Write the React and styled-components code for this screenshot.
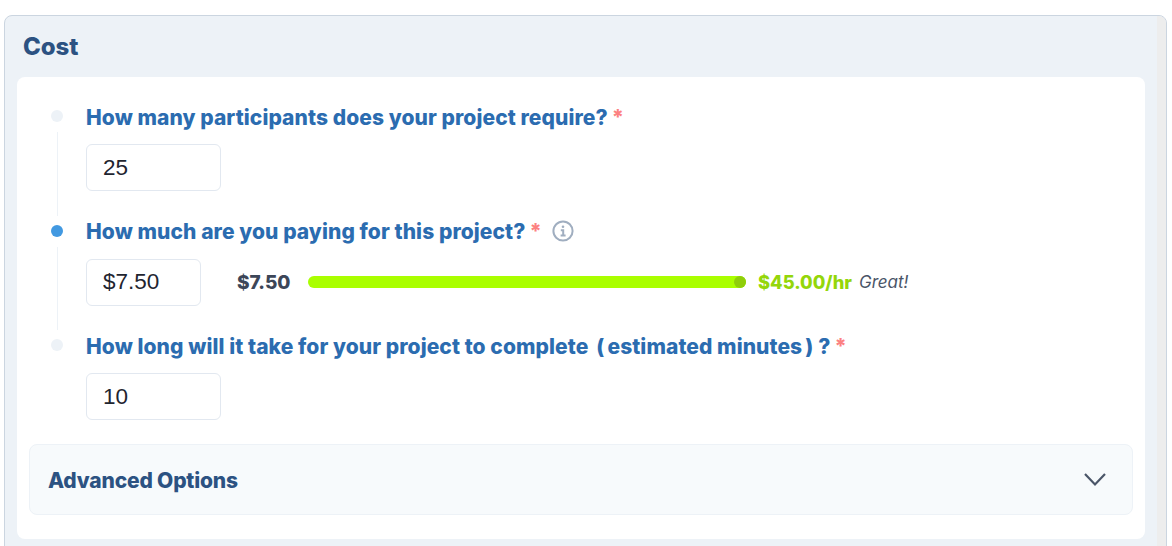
import React from 'react';
import styled, { createGlobalStyle } from 'styled-components';

const GlobalStyle = createGlobalStyle`
  html, body {
    margin: 0;
    height: 546px;
    overflow: hidden;
    background: #fff;
    font-family: Inter, "Liberation Sans", sans-serif;
  }
`;

const Page = styled.div`
  padding: 15px 5px 0 4px;
`;

const Panel = styled.section`
  display: flex;
  height: 560px;
  box-sizing: border-box;
  background: #edf2f7;
  border: 1px solid #cbd5e0;
  border-radius: 8px;
  overflow: hidden;
`;

const PanelBody = styled.div`
  flex: 1;
  min-width: 0;
  padding: 0 12px;
`;

const Gutter = styled.div`
  width: 9px;
  background: #ededed;
`;

const Title = styled.h2`
  margin: 0;
  height: 61px;
  padding: 19px 0 0 6px;
  box-sizing: border-box;
  font-size: 24px;
  line-height: 24px;
  font-weight: 800;
  letter-spacing: -0.1px;
  color: #2c5282;
`;

const Card = styled.div`
  background: #fff;
  border-radius: 8px;
  padding: 28px 12px 25px;
  height: 462px;
  box-sizing: border-box;
`;

const Step = styled.div`
  display: grid;
  grid-template-columns: 22px 1fr;
  column-gap: 18px;
  margin-left: 17px;
  height: ${p => (p.$last ? 'auto' : '114.5px')};
`;

const Rail = styled.div`
  display: flex;
  flex-direction: column;
  align-items: center;
  padding-top: 5px;
  box-sizing: border-box;
`;

const Dot = styled.div`
  width: 12px;
  height: 12px;
  border-radius: 50%;
  background: ${p => (p.$active ? '#4299e1' : '#edf2f7')};
`;

const RailLine = styled.div`
  flex: 1;
  width: 1px;
  margin: 10px 0 4px;
  background: #edf2f7;
`;

const Label = styled.div`
  display: flex;
  align-items: center;
  height: 24px;
  margin-bottom: 15px;
  font-size: 21px;
  font-weight: 800;
  letter-spacing: 0.08px;
  color: #2b6cb0;
  white-space: nowrap;
`;

const Paren = styled.span`
  margin: 0 ${p => p.$right || 0}px 0 ${p => p.$left || 0}px;
`;

const Required = styled.span`
  margin-left: 4px;
  color: #fc8181;
  font-size: 21px;
  font-weight: 800;
`;

const HelpIcon = styled.svg`
  margin: 0 0 2px 10px;
  width: 22px;
  height: 22px;
`;

const FieldRow = styled.div`
  display: flex;
  align-items: center;
`;

const Input = styled.input`
  width: ${p => p.$w}px;
  height: 47px;
  box-sizing: border-box;
  padding: 0 16px;
  border: 1px solid #e2e8f0;
  border-radius: 6px;
  background: #fff;
  color: #1f2530;
  font-family: "Liberation Sans", Arial, sans-serif;
  font-size: 22.5px;
  outline: none;
`;

const PayAmount = styled.span`
  margin-left: 36px;
  width: 71px;
  font-size: 19px;
  font-weight: 800;
  color: #3c4658;
`;

const Track = styled.div`
  position: relative;
  width: 438px;
  height: 12px;
  border-radius: 6px;
  background: #edf2f7;
`;

const Fill = styled.div`
  height: 100%;
  border-radius: 6px;
  background: #aaff00;
`;

const Thumb = styled.div`
  position: absolute;
  top: 0;
  right: 0;
  width: 12px;
  height: 12px;
  border-radius: 50%;
  background: #8fce0a;
`;

const Rate = styled.span`
  margin-left: 12px;
  font-size: 18.3px;
  font-weight: 800;
  color: #94d60a;
`;

const Verdict = styled.span`
  margin-left: 7px;
  font-size: 17px;
  font-style: italic;
  color: #4a5568;
`;

const Accordion = styled.div`
  display: flex;
  align-items: center;
  justify-content: space-between;
  box-sizing: border-box;
  height: 71px;
  margin-top: 24px;
  padding: 0 25px 0 18px;
  background: #f7fafc;
  border: 1px solid #edf2f7;
  border-radius: 8px;
`;

const AccordionTitle = styled.span`
  padding-top: 1px;
  font-size: 21px;
  font-weight: 800;
  letter-spacing: -0.17px;
  color: #2c5282;
`;

const steps = [
  { label: 'How many participants does your project require?', value: '25', width: 135 },
  { label: 'How much are you paying for this project?', value: '$7.50', width: 115, active: true, pay: true },
  {
    label: (
      <>
        How long will it take for your project to complete <Paren $left={8} $right={3}>(</Paren>estimated minutes<Paren $left={3} $right={5}>)</Paren>?
      </>
    ),
    value: '10',
    width: 135,
  },
];

function InfoIcon() {
  return (
    <HelpIcon viewBox="0 0 22 22" fill="none" stroke="#a0aec0" strokeWidth="2">
      <circle cx="11" cy="11" r="9.6" />
      <circle cx="11" cy="6.8" r="1.3" fill="#a0aec0" stroke="none" />
      <path d="M8.8 10.2H11.2V15.6M8.6 15.6H13.6" />
    </HelpIcon>
  );
}

export default function App() {
  const paidPct = 100;
  return (
    <Page>
      <GlobalStyle />
      <Panel>
        <PanelBody>
          <Title>Cost</Title>
          <Card>
            {steps.map((step, i) => {
              const last = i === steps.length - 1;
              return (
                <Step key={i} $last={last}>
                  <Rail>
                    <Dot $active={step.active} />
                    {!last && <RailLine />}
                  </Rail>
                  <div>
                    <Label>
                      {step.label}
                      <Required>*</Required>
                      {step.pay && <InfoIcon />}
                    </Label>
                    <FieldRow>
                      <Input $w={step.width} defaultValue={step.value} />
                      {step.pay && (
                        <>
                          <PayAmount>$7.50</PayAmount>
                          <Track>
                            <Fill style={{ width: `${paidPct}%` }} />
                            <Thumb />
                          </Track>
                          <Rate>$45.00/hr</Rate>
                          <Verdict>Great!</Verdict>
                        </>
                      )}
                    </FieldRow>
                  </div>
                </Step>
              );
            })}
            <Accordion>
              <AccordionTitle>Advanced Options</AccordionTitle>
              <svg width="24" height="15" viewBox="0 0 24 15" fill="none" stroke="#4a5568" strokeWidth="2.2">
                <path d="M2 2L12 12.5L22 2" />
              </svg>
            </Accordion>
          </Card>
        </PanelBody>
        <Gutter />
      </Panel>
    </Page>
  );
}
